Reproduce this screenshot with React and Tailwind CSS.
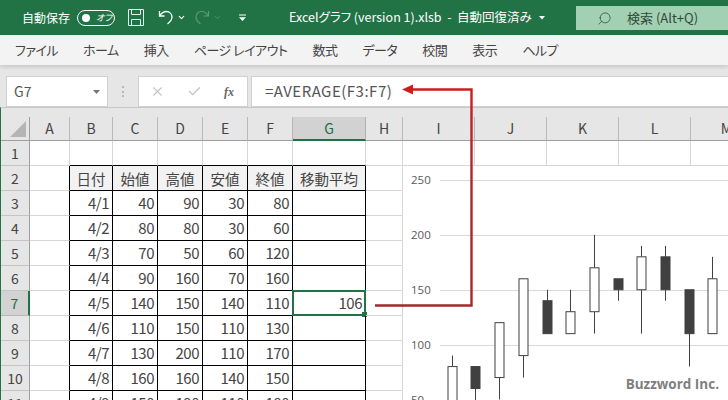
import { Search, ChevronDown, X, Check } from "lucide-react";

const FONT = "[font-family:'Noto_Sans_CJK_JP','Liberation_Sans',sans-serif] [font-feature-settings:'palt']";

const MENU = ["ファイル", "ホーム", "挿入", "ページ レイアウト", "数式", "データ", "校閲", "表示", "ヘルプ"];

const COLUMNS = [
  { name: "A", cls: "w-[40px]" },
  { name: "B", cls: "w-[43px]" },
  { name: "C", cls: "w-[45px]" },
  { name: "D", cls: "w-[45px]" },
  { name: "E", cls: "w-[45px]" },
  { name: "F", cls: "w-[45px]" },
  { name: "G", cls: "w-[73px]" },
  { name: "H", cls: "w-[37px]" },
  { name: "I", cls: "w-[72px]" },
  { name: "J", cls: "w-[72px]" },
  { name: "K", cls: "w-[72px]" },
  { name: "L", cls: "w-[72px]" },
  { name: "M", cls: "w-[72px]" },
];

const HEAD = ["日付", "始値", "高値", "安値", "終値", "移動平均"];

const DATA = [
  ["4/1", 40, 90, 30, 80, ""],
  ["4/2", 80, 80, 30, 60, ""],
  ["4/3", 70, 50, 60, 120, ""],
  ["4/4", 90, 160, 70, 160, ""],
  ["4/5", 140, 150, 140, 110, 106],
  ["4/6", 110, 150, 110, 130, ""],
  ["4/7", 130, 200, 110, 170, ""],
  ["4/8", 160, 160, 140, 150, ""],
  ["4/9", 150, 190, 110, 180, ""],
];

// open, close, high, low
const CANDLES = [
  [40, 80, 90, 30],
  [80, 60, 80, 30],
  [70, 120, 120, 50],
  [90, 160, 160, 70],
  [140, 110, 150, 110],
  [110, 130, 150, 110],
  [130, 170, 200, 110],
  [160, 150, 160, 140],
  [150, 180, 190, 110],
  [180, 150, 190, 140],
  [150, 110, 150, 80],
  [110, 160, 180, 110],
];

const yOf = (v) => 233.5 - (v - 50) * 1.0975;

function TitleBar() {
  return (
    <div className="flex h-[35px] items-center bg-[#217346] pl-[22px] text-white">
      <span className="text-[12px]">自動保存</span>
      <div className="ml-[7px] flex h-[16px] w-[38px] items-center rounded-full border border-white pl-[4px]">
        <div className="size-[8px] rounded-full bg-white" />
        <span className="ml-[6px] text-[9px] italic leading-none">オフ</span>
      </div>
      <svg className="ml-[13px]" width="16" height="17" viewBox="0 0 16 17" fill="none" stroke="#e4efe8" strokeWidth="1">
        <path d="M.5.5h15v16H.5z" />
        <path d="M3.5.5v5h9v-5M3.5 16.5v-6h9v6" />
      </svg>
      <svg className="ml-[14px]" width="16" height="16" viewBox="0 0 16 16" fill="none" stroke="#fff" strokeWidth="1.3">
        <path d="M1.5 1v5h5M1.5 6C3.5 3 6 1.5 8.5 1.5c3 0 5.5 2.5 5.5 5.5 0 3-2 5-4.5 7" />
      </svg>
      <ChevronDown className="ml-[3px]" size={9} strokeWidth={3} />
      <svg className="ml-[8px]" width="16" height="16" viewBox="0 0 16 16" fill="none" stroke="#5f9a78" strokeWidth="1.2">
        <path d="M14.5 1v5h-5M14.5 6C12.5 3 10 1.5 7.5 1.5c-3 0-5.5 2.5-5.5 5.5 0 3 2 5 4.5 7" />
      </svg>
      <ChevronDown className="ml-[3px] text-[#5f9a78]" size={9} strokeWidth={2} />
      <svg className="ml-[17px]" width="7" height="8" viewBox="0 0 8 8" fill="#fff">
        <path d="M0 0h8v1H0zM0 3h8L4 7.5z" />
      </svg>
      <span className="ml-[43px] text-[12.5px] whitespace-pre">Excelグラフ (version 1).xlsb  -  自動回復済み</span>
      <svg className="ml-[7px]" width="6" height="4" viewBox="0 0 6 4" fill="#fff">
        <path d="M0 0h6L3 3.5z" />
      </svg>
      <div className="mt-[6px] ml-auto flex h-[24px] w-[152px] items-center self-start bg-[#a2d0b2] pl-[21px] text-[#2f4a3a]">
        <Search size={15} strokeWidth={1.2} className="-scale-x-100" />
        <span className="ml-[15px] text-[13px]">検索 (Alt+Q)</span>
      </div>
    </div>
  );
}

function MenuBar() {
  return (
    <div className="relative z-10 flex h-[30px] items-center gap-[25px] bg-[#f3f3f3] pl-[15px] text-[13px] tracking-[-0.5px] text-[#444] shadow-[0_2px_4px_rgba(0,0,0,0.14)]">
      {MENU.map((m) => (
        <span key={m} className="whitespace-pre">{m}</span>
      ))}
    </div>
  );
}

function FormulaBar() {
  return (
    <div className="flex h-[42px] items-end bg-[#e6e6e6] pl-[6px]">
      <div className="flex h-[31px] w-[102px] items-center justify-between border border-[#d0d0d0] bg-white pr-[7px] pl-[7px] text-[14px] text-[#555]">
        G7
        <svg width="7" height="4" viewBox="0 0 7 4" fill="#777"><path d="M0 0h7L3.5 4z" /></svg>
      </div>
      <div className="mb-[10px] ml-[14px] flex h-[11px] w-[2px] flex-col justify-between">
        <div className="h-[2px] bg-[#b8b8b8]" />
        <div className="h-[2px] bg-[#b8b8b8]" />
        <div className="h-[2px] bg-[#b8b8b8]" />
      </div>
      <div className="ml-[14px] flex h-[31px] w-[110px] items-center border border-[#d0d0d0] bg-white pl-[11px] text-[#c4c4c4]">
        <X size={15} strokeWidth={1.8} />
        <Check size={15} strokeWidth={2.2} className="ml-[22px]" />
        <span className="ml-[22px] text-[12px] font-bold text-[#666] italic [font-family:'Liberation_Serif',serif]">fx</span>
      </div>
      <div className="ml-[3px] flex h-[31px] flex-1 items-center border border-r-0 border-[#d0d0d0] bg-white pl-[13px] text-[15px] tracking-[0.5px] text-[#555]">
        =AVERAGE(F3:F7)
      </div>
    </div>
  );
}

function ColumnHeader() {
  return (
    <div className="flex h-[33px] bg-[#e6e6e6] pt-[9px]">
      <div className="relative h-[24px] w-[29px] shrink-0 border-r border-b border-[#9e9e9e]">
        <div className="absolute right-[3px] bottom-[3px] size-0 border-b-[16px] border-l-[16px] border-b-[#b5b5b5] border-l-transparent" />
      </div>
      {COLUMNS.map((c) =>
        c.name === "G" ? (
          <div key={c.name} className={`${c.cls} h-[24px] shrink-0 border-r border-b-2 border-r-[#b0b0b0] border-b-[#217346] bg-[#d2d2d2] text-center text-[14px] leading-[23px] text-[#1f6b42]`}>
            {c.name}
          </div>
        ) : (
          <div key={c.name} className={`${c.cls} h-[24px] shrink-0 border-r border-b border-r-[#b8b8b8] border-b-[#9e9e9e] text-center text-[14px] leading-[23px] text-[#444]`}>
            {c.name}
          </div>
        )
      )}
    </div>
  );
}

function Cell({ col, row }) {
  const ci = COLUMNS.indexOf(col);
  // table spans B2:G11, black borders sit on the right/bottom edge of each cell
  const inRows = row >= 2;
  const black = ci >= 1 && ci <= 6 && inRows;
  const rightBlack = (ci === 0 && inRows) || black;
  const bottomBlack = ci >= 1 && ci <= 6 && row >= 1;
  const header = black && row === 2;
  const value = black && (row === 2 ? HEAD[ci - 1] : DATA[row - 3]?.[ci - 1]);
  return (
    <div
      className={`${col.cls} relative flex h-[25px] shrink-0 items-center border-r border-b pt-px text-[#444] ${rightBlack ? "border-r-black" : "border-r-[#d6d6d6]"} ${bottomBlack ? "border-b-black" : "border-b-[#d6d6d6]"} ${header ? "justify-center bg-[#f2f2f2] text-[14.5px]" : "justify-end pr-[3px] text-[15px] tracking-[-0.5px]"}`}
    >
      {value}
      {col.name === "G" && row === 7 && (
        <div className="absolute -top-px -left-px h-[26px] w-[74px] border-2 border-[#217346]">
          <div className="absolute -right-[3px] -bottom-[3px] size-[5px] bg-[#217346]" />
        </div>
      )}
    </div>
  );
}

function Sheet() {
  const rows = [1, 2, 3, 4, 5, 6, 7, 8, 9, 10, 11];
  return (
    <div className="flex flex-col">
      {rows.map((r) => (
        <div key={r} className="flex">
          {r === 7 ? (
            <div className="flex h-[25px] w-[29px] shrink-0 items-center justify-center border-r-2 border-b border-r-[#217346] border-b-[#b8b8b8] bg-[#d2d2d2] pt-px text-[14px] text-[#1f6b42]">{r}</div>
          ) : (
            <div className="flex h-[25px] w-[29px] shrink-0 items-center justify-center border-r border-b border-r-[#9e9e9e] border-b-[#c4c4c4] bg-[#e6e6e6] pt-px text-[14px] text-[#444]">{r}</div>
          )}
          {COLUMNS.map((c) => (
            <Cell key={c.name} col={c} row={r} />
          ))}
        </div>
      ))}
    </div>
  );
}

function Chart() {
  return (
    <div className="absolute top-[166px] left-[403px] h-[234px] w-[325px] bg-white">
      <svg width="325" height="234" viewBox="0 0 325 234" fill="none">
        {[250, 200, 150, 100, 50].map((v) => (
          <g key={v}>
            <path d={`M37 ${Math.round(yOf(v)) + 0.5}H325`} stroke="#d9d9d9" />
            <text x="8" y={Math.round(yOf(v)) + 4} fontSize="11.5" fill="#595959" fontFamily="'Open Sans', sans-serif">{v}</text>
          </g>
        ))}
        {CANDLES.map(([o, c, h, l], i) => {
          const x = Math.round(48.7 + i * 23.7) + 0.5;
          const up = c > o;
          const top = yOf(Math.max(o, c));
          const bottom = yOf(Math.min(o, c));
          return (
            <g key={i} stroke="#404040">
              <path d={`M${x} ${yOf(h)}V${top}M${x} ${bottom}V${yOf(l)}`} />
              <rect x={x - 4.5} y={top} width="9" height={bottom - top} fill={up ? "#fff" : "#404040"} />
            </g>
          );
        })}
      </svg>
      <div className="absolute right-[9px] bottom-[9px] text-[13.5px] leading-none font-bold text-[#7f7f7f] [font-family:'Open_Sans',sans-serif]">
        Buzzword Inc.
      </div>
    </div>
  );
}

function Arrow() {
  return (
    <svg className="pointer-events-none absolute top-0 left-0" width="728" height="400" viewBox="0 0 728 400" fill="none">
      <defs>
        <linearGradient id="arrowLine" gradientUnits="userSpaceOnUse" x1="0" y1="89" x2="0" y2="306">
          <stop offset="0" stopColor="#d01c1c" />
          <stop offset="0.3" stopColor="#b0262a" />
          <stop offset="1" stopColor="#a5282c" />
        </linearGradient>
      </defs>
      <path d="M375 305.5H471.5V89.5H410" stroke="url(#arrowLine)" strokeWidth="2.4" />
      <path d="M402 89.5l11-5v10z" fill="#d01c1c" />
    </svg>
  );
}

export default function App() {
  return (
    <div className={`relative h-[400px] w-[728px] overflow-hidden bg-white ${FONT}`}>
      <TitleBar />
      <MenuBar />
      <FormulaBar />
      <div className="border-t border-l border-t-[#c8c8c8] border-l-[#217346]">
        <ColumnHeader />
        <Sheet />
      </div>
      <Chart />
      <Arrow />
    </div>
  );
}
